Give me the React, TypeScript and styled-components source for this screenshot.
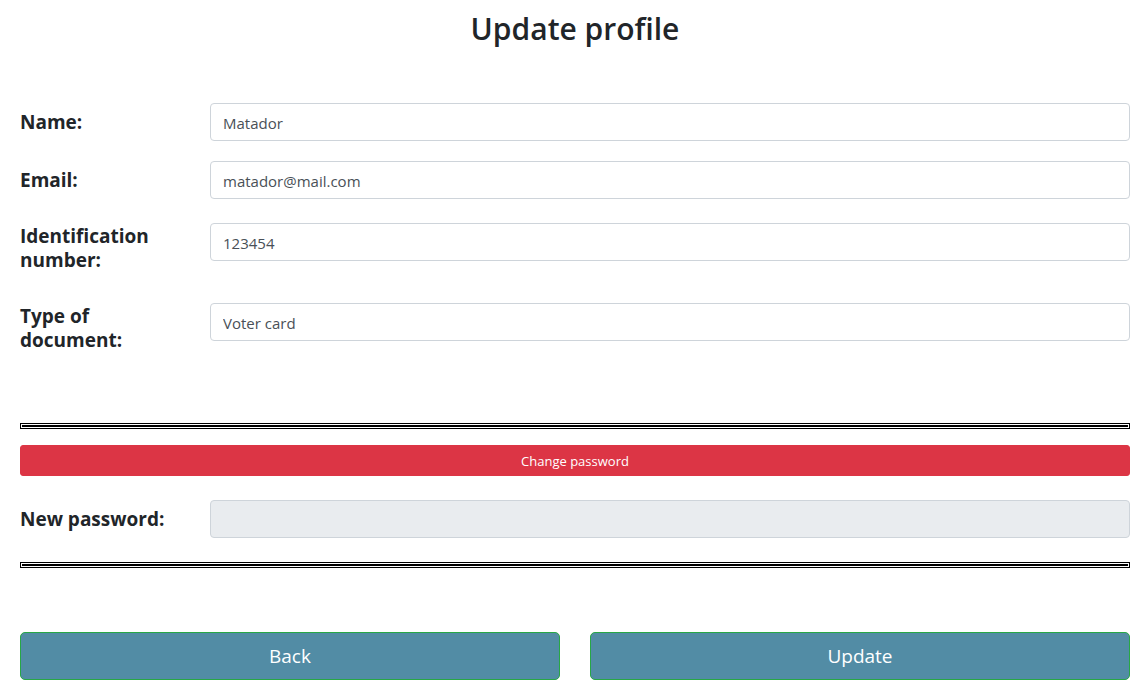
import React from "react";
import styled, { createGlobalStyle } from "styled-components";

const Global = createGlobalStyle`
  html, body { margin: 0; padding: 0; background: #fff; }
  body {
    font-family: "Segoe UI", "Open Sans", "Noto Sans", Arial, sans-serif;
    color: #212529;
  }
  * { box-sizing: border-box; }
`;

const Page = styled.div`
  padding: 0 6px 0 20px;
  display: flex;
  flex-direction: column;
`;

const Title = styled.h2`
  margin: 7px 0 0;
  font-size: 30px;
  font-weight: 600;
  line-height: 44px;
  text-align: center;
  color: #212529;
`;

const Form = styled.form`
  display: flex;
  flex-direction: column;
  margin-top: 52px;
`;

const Row = styled.div<{ $top?: number }>`
  display: grid;
  grid-template-columns: 160px 1fr;
  column-gap: 30px;
  align-items: start;
  margin-top: ${(p) => p.$top ?? 0}px;
`;

const Label = styled.label<{ $multiline?: boolean }>`
  font-size: 19px;
  font-weight: 700;
  line-height: 24px;
  color: #212529;
  padding-top: ${(p) => (p.$multiline ? 1 : 7)}px;
`;

const Input = styled.input`
  display: block;
  width: 100%;
  height: 38px;
  padding: 6px 12px 5px;
  font-family: inherit;
  font-size: 15px;
  line-height: 24px;
  color: #495057;
  background: #fff;
  border: 1px solid #ced4da;
  border-radius: 4px;
  outline: none;
  &:disabled {
    background: #e9ecef;
  }
`;

const Rule = styled.hr<{ $top: number }>`
  width: 100%;
  height: 0;
  margin: ${(p) => p.$top}px 0 0;
  border: 3px double #000;
`;

const DangerButton = styled.button`
  margin-top: 16px;
  width: 100%;
  height: 31px;
  padding: 4px 8px;
  font-family: inherit;
  font-size: 13px;
  line-height: 22px;
  color: #fff;
  background: #dc3545;
  border: 1px solid #dc3545;
  border-radius: 3px;
`;

const Actions = styled.div`
  margin-top: 64px;
  display: grid;
  grid-template-columns: 1fr 1fr;
  column-gap: 30px;
`;

const ActionButton = styled.button`
  height: 48px;
  padding: 8px 16px;
  font-family: inherit;
  font-size: 19px;
  line-height: 31px;
  color: #fff;
  background: #528ca5;
  border: 1px solid #28a745;
  border-radius: 5px;
`;

export default function App() {
  return (
    <>
      <Global />
      <Page>
        <Title>Update profile</Title>
        <Form onSubmit={(e) => e.preventDefault()}>
          <Row>
            <Label>Name:</Label>
            <Input defaultValue="Matador" />
          </Row>
          <Row $top={20}>
            <Label>Email:</Label>
            <Input defaultValue="matador@mail.com" />
          </Row>
          <Row $top={24}>
            <Label $multiline>Identification number:</Label>
            <Input defaultValue="123454" />
          </Row>
          <Row $top={31}>
            <Label $multiline>Type of document:</Label>
            <Input defaultValue="Voter card" />
          </Row>
          <Rule $top={71} />
          <DangerButton type="button">Change password</DangerButton>
          <Row $top={24}>
            <Label>New password:</Label>
            <Input type="password" disabled />
          </Row>
          <Rule $top={24} />
          <Actions>
            <ActionButton type="button">Back</ActionButton>
            <ActionButton type="submit">Update</ActionButton>
          </Actions>
        </Form>
      </Page>
    </>
  );
}
